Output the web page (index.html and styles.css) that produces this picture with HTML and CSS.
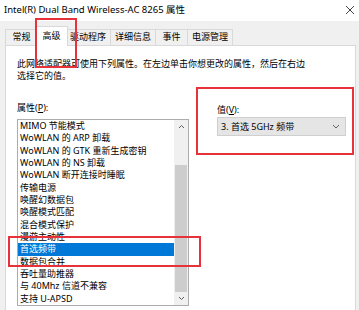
FILE: index.html
```html
<!DOCTYPE html>
<html>

<head>
  <meta charset="utf-8">
  <meta name="viewport" content="width=device-width">
  <title>属性</title>
  <link rel="stylesheet" href="styles.css">
</head>

<body>
<div class="window">

  <header class="titlebar">
    <span class="title">Intel(R) Dual Band Wireless-AC 8265 属性</span>
    <svg class="close" width="10" height="10" viewBox="0 0 10 10">
      <path d="M1 1 L9 9 M9 1 L1 9" stroke="#444" stroke-width="1" fill="none"/>
    </svg>
  </header>

  <main class="frame">
    <nav class="tabs">
      <div class="tab">常规</div>
      <div class="tab active">高级</div>
      <div class="tab">驱动程序</div>
      <div class="tab">详细信息</div>
      <div class="tab">事件</div>
      <div class="tab">电源管理</div>
    </nav>

    <section class="panel">
      <p class="desc">此网络适配器可使用下列属性。在左边单击你想更改的属性，然后在右边<br>选择它的值。</p>

      <div class="props">
        <div class="col-left">
          <div class="label">属性(<u>P</u>):</div>
          <div class="listbox">
            <ul class="items">
              <li>MIMO 节能模式</li>
              <li>WoWLAN 的 ARP 卸载</li>
              <li>WoWLAN 的 GTK 重新生成密钥</li>
              <li>WoWLAN 的 NS 卸载</li>
              <li>WoWLAN 断开连接时睡眠</li>
              <li>传输电源</li>
              <li>唤醒幻数据包</li>
              <li>唤醒模式匹配</li>
              <li>混合模式保护</li>
              <li>漫游主动性</li>
              <li class="selected">首选频带</li>
              <li>数据包合并</li>
              <li>吞吐量助推器</li>
              <li>与 40Mhz 信道不兼容</li>
              <li>支持 U-APSD</li>
            </ul>
            <div class="scrollbar">
              <div class="arrow">
                <svg width="7" height="5" viewBox="0 0 7 5"><path d="M1 4 L3.5 1.5 L6 4" stroke="#606060" fill="none"/></svg>
              </div>
              <div class="track"><div class="thumb"></div></div>
              <div class="arrow">
                <svg width="7" height="5" viewBox="0 0 7 5"><path d="M1 1 L3.5 3.5 L6 1" stroke="#606060" fill="none"/></svg>
              </div>
            </div>
          </div>
        </div>

        <div class="col-right">
          <div class="label">值(<u>V</u>):</div>
          <div class="select">
            <span>3. 首选 5GHz 频带</span>
            <svg width="8" height="5" viewBox="0 0 8 5"><path d="M1 1 L4 4 L7 1" stroke="#606060" fill="none"/></svg>
          </div>
        </div>
      </div>
    </section>
  </main>

  <!-- red annotation boxes -->
  <div class="mark mark-tab"></div>
  <div class="mark mark-value"></div>
  <div class="mark mark-item"></div>
</div>
</body>

</html>
```

FILE: styles.css
```css
* {
  box-sizing: border-box;
}

body {
  margin: 0;
  padding: 0;
  background-color: #f0f0f0;
  font-family: "Noto Sans", "Noto Sans CJK SC", sans-serif;
  font-size: 9px;
  color: #000;
  overflow: hidden;
}

.window {
  position: relative;
  width: 359px;
  height: 310px;
  overflow: hidden;
  display: flex;
  flex-direction: column;
}

.titlebar {
  height: 21px;
  background-color: #fff;
  display: flex;
  align-items: center;
  justify-content: space-between;
  padding: 0 4px 1px 4px;
}

.title {
  font-size: 9.5px;
  line-height: 12px;
}

.frame {
  flex-grow: 1;
  padding: 5px 3px 0 5px;
  display: flex;
  flex-direction: column;
}

.tabs {
  display: flex;
  align-items: flex-end;
  height: 19px;
}

.tab {
  min-width: 33px;
  height: 16px;
  padding: 0 4px;
  text-align: center;
  line-height: 14px;
  background-color: #f0f0f0;
  border: 1px solid #d9d9d9;
  border-bottom: none;
  margin-right: -1px;
}

.tab.active {
  position: relative;
  z-index: 2;
  height: 20px;
  margin: 0 -3px -1px -2px;
  padding: 2px 6px 0 6px;
  background-color: #fff;
  line-height: 13px;
}

.panel {
  flex-grow: 1;
  background-color: #fff;
  border: 1px solid #d9d9d9;
  border-bottom: none;
  padding: 12px 0 0 11px;
}

.desc {
  margin: 0;
  line-height: 12px;
}

.props {
  display: flex;
  gap: 28px;
  margin-top: 20px;
}

.label {
  line-height: 12px;
  margin-bottom: 5px;
}

.listbox {
  width: 172px;
  height: 187px;
  border: 1px solid #acacac;
  display: flex;
}

.items {
  list-style: none;
  margin: 0;
  padding: 0;
  flex-grow: 1;
}

.items li {
  height: 12.35px;
  line-height: 12.35px;
  padding-left: 2px;
  white-space: nowrap;
}

.items li.selected {
  background-color: #0078d7;
  color: #fff;
}

.scrollbar {
  width: 14px;
  display: flex;
  flex-direction: column;
  background-color: #f0f0f0;
}

.arrow {
  height: 14px;
  display: flex;
  align-items: center;
  justify-content: center;
}

.track {
  flex-grow: 1;
  padding: 31px 0 0 1px;
}

.thumb {
  width: 12px;
  height: 127px;
  background-color: #cdcdcd;
}

.col-right {
  margin-top: 2px;
}

.col-right .label {
  margin-bottom: 1px;
}

.select {
  width: 129px;
  height: 19px;
  background-color: #e5e5e5;
  border: 1px solid #cfcfcf;
  display: flex;
  align-items: center;
  justify-content: space-between;
  padding: 0 5px 0 3px;
}

.mark {
  position: absolute;
  border: 2px solid #e8323a;
  z-index: 5;
}

.mark-tab {
  left: 35px;
  top: 18px;
  width: 42px;
  height: 50px;
}

.mark-value {
  left: 196px;
  top: 87px;
  width: 158px;
  height: 68px;
}

.mark-item {
  left: 8px;
  top: 236px;
  width: 193px;
  height: 31px;
}
```
